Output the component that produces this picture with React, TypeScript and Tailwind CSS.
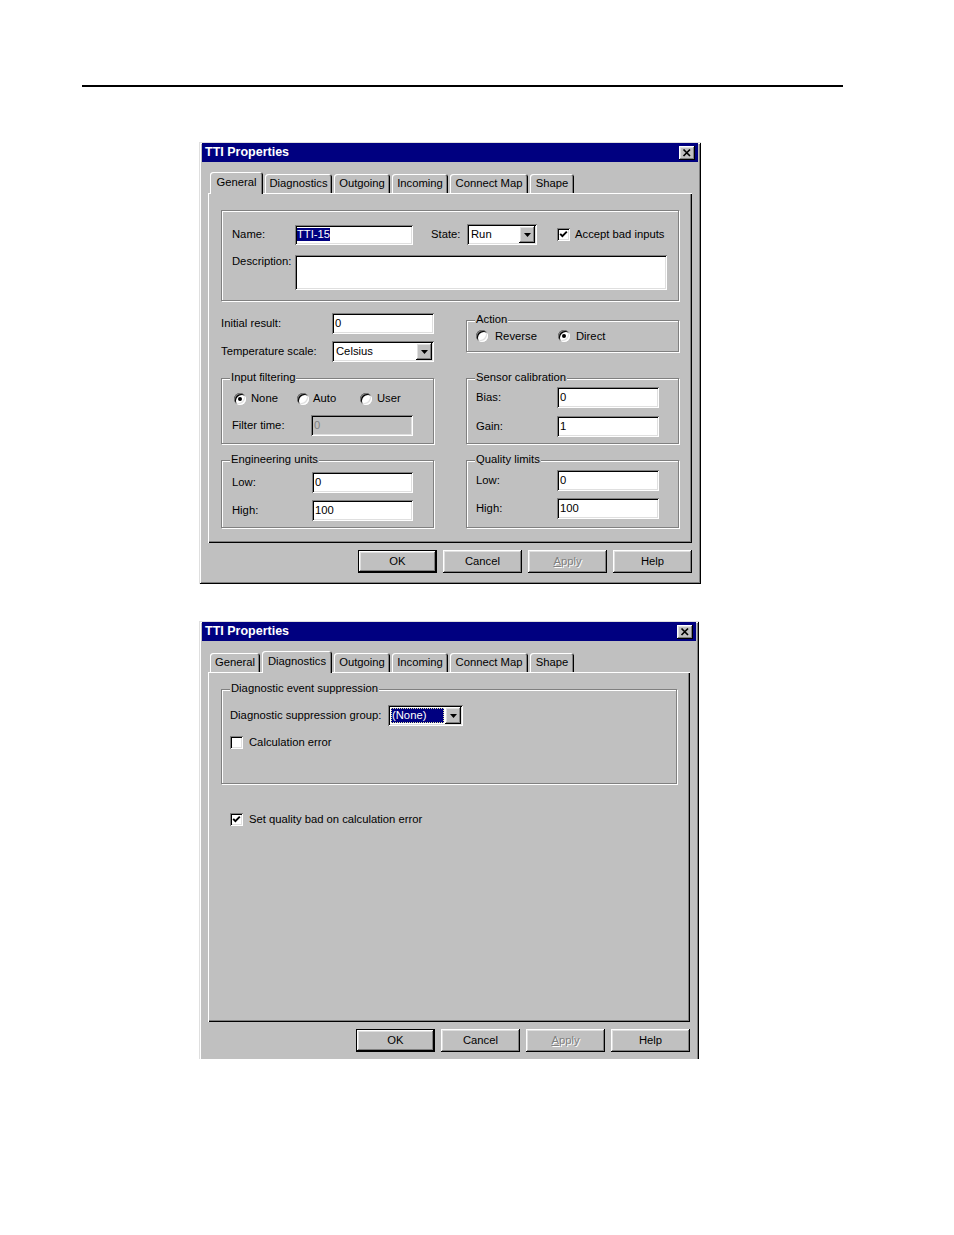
import React from "react";

const RAISED =
  "shadow-[inset_-1px_-1px_0_#000,inset_1px_1px_0_#fff,inset_-2px_-2px_0_#808080,inset_2px_2px_0_#dfdfdf]";
const SUNKEN =
  "shadow-[inset_1px_1px_0_#808080,inset_-1px_-1px_0_#fff,inset_2px_2px_0_#000,inset_-2px_-2px_0_#dfdfdf]";

function Sunken({
  className = "",
  disabled = false,
  children,
}: {
  className?: string;
  disabled?: boolean;
  children?: React.ReactNode;
}) {
  return (
    <div
      className={`${disabled ? "bg-[#c0c0c0] text-[#808080]" : "bg-white"} ${SUNKEN} flex items-center shrink-0 ${className}`}
    >
      {children}
    </div>
  );
}

function Combo({
  className = "",
  highlighted = false,
  children,
}: {
  className?: string;
  highlighted?: boolean;
  children?: React.ReactNode;
}) {
  return (
    <div className={`bg-white ${SUNKEN} flex items-stretch p-[2px] shrink-0 ${className}`}>
      {highlighted ? (
        <div className="flex-1 flex items-center m-[1px] pl-[1px] bg-[#000080] text-white outline-1 outline-dotted outline-[#e0e0a0] -outline-offset-1 min-w-0">
          {children}
        </div>
      ) : (
        <div className="flex-1 flex items-center pl-[2px] min-w-0">{children}</div>
      )}
      <div className={`w-[16px] bg-[#c0c0c0] ${RAISED} flex items-center justify-center`}>
        <svg width="7" height="4" viewBox="0 0 7 4">
          <polygon points="0,0 7,0 3.5,4" fill="#000" />
        </svg>
      </div>
    </div>
  );
}

function Check({ checked = false, className = "" }: { checked?: boolean; className?: string }) {
  return (
    <span
      className={`w-[13px] h-[13px] bg-white ${SUNKEN} flex items-center justify-center shrink-0 ${className}`}
    >
      {checked && (
        <svg width="13" height="13" viewBox="0 0 13 13">
          <polyline points="3.2,5.8 5.4,8.2 9.8,3.6" fill="none" stroke="#000" strokeWidth="1.9" />
        </svg>
      )}
    </span>
  );
}

function Radio({ checked = false }: { checked?: boolean }) {
  return (
    <span
      className={`w-[12px] h-[12px] rounded-full bg-white ${SUNKEN} flex items-center justify-center shrink-0`}
    >
      {checked && <span className="w-[4px] h-[4px] rounded-full bg-black" />}
    </span>
  );
}

function RadioItem({
  label,
  checked = false,
  className = "",
  gapClass = "ml-[5px]",
}: {
  label: string;
  checked?: boolean;
  className?: string;
  gapClass?: string;
}) {
  return (
    <div className={`flex items-center ${className}`}>
      <Radio checked={checked} />
      <span className={gapClass}>{label}</span>
    </div>
  );
}

function Group({
  label,
  className = "",
  children,
}: {
  label?: string;
  className?: string;
  children?: React.ReactNode;
}) {
  return (
    <div
      className={`relative border border-[#808080] shadow-[inset_1px_1px_0_#fff,1px_1px_0_#fff] ${className}`}
    >
      {label && (
        <span className="absolute left-[8px] -top-[8px] px-[1px] bg-[#c0c0c0] leading-[13px] whitespace-nowrap">
          {label}
        </span>
      )}
      {children}
    </div>
  );
}

function Btn({ children, def = false }: { children: React.ReactNode; def?: boolean }) {
  return (
    <div
      className={`w-[79px] h-[23px] bg-[#c0c0c0] flex items-center justify-center ${def ? "border border-black" : ""}`}
    >
      <div className={`w-full h-full flex items-center justify-center ${RAISED}`}>{children}</div>
    </div>
  );
}

const TAB_NAMES = ["General", "Diagnostics", "Outgoing", "Incoming", "Connect Map", "Shape"];

function Tabs({ active, widths }: { active: number; widths: string[] }) {
  return (
    <div className="flex items-end h-[21px] pl-[2px] gap-[2px]">
      {TAB_NAMES.map((t, i) =>
        i === active ? (
          <div
            key={t}
            className={`${widths[i]} h-[22px] -mb-[1px] pb-[2px] relative z-10 bg-[#c0c0c0] rounded-t-[3px] shadow-[inset_1px_1px_0_#fff,inset_-1px_0_0_#000,inset_-2px_0_0_#808080] flex items-center justify-center`}
          >
            {t}
          </div>
        ) : (
          <div
            key={t}
            className={`${widths[i]} h-[19px] rounded-t-[3px] shadow-[inset_1px_1px_0_#fff,inset_-1px_0_0_#000,inset_-2px_0_0_#808080] flex items-center justify-center`}
          >
            {t}
          </div>
        )
      )}
    </div>
  );
}

function TitleBar() {
  return (
    <div className="h-[19px] bg-[#000080] flex items-center justify-between pl-[3px] pr-[3px]">
      <span className="text-white font-bold text-[12.5px] leading-none">TTI Properties</span>
      <div className={`w-[16px] h-[14px] bg-[#c0c0c0] ${RAISED} flex items-center justify-center`}>
        <svg width="16" height="14" viewBox="0 0 16 14">
          <path d="M4.5 3.5 L11 10 M11 3.5 L4.5 10" stroke="#000" strokeWidth="1.7" fill="none" />
        </svg>
      </div>
    </div>
  );
}

function Buttons() {
  return (
    <div className="flex justify-end gap-[6px] mt-[7px] mr-[6px]">
      <Btn def>OK</Btn>
      <Btn>Cancel</Btn>
      <Btn>
        <span className="text-[#808080] [text-shadow:1px_1px_0_#fff]">
          <span className="underline">A</span>pply
        </span>
      </Btn>
      <Btn>Help</Btn>
    </div>
  );
}

const PANEL =
  "h-[350px] mx-[6px] bg-[#c0c0c0] relative shadow-[inset_1px_1px_0_#fff,inset_-1px_-1px_0_#000,inset_-2px_-2px_0_#808080] pt-[17px] px-[13px]";

function Dialog1() {
  return (
    <div className="ml-[199px] mt-[55px] w-[502px] bg-[#c0c0c0] px-[3px] pt-[1px] pb-[11px] shadow-[inset_1px_1px_0_#dfdfdf,inset_-1px_-1px_0_#000,inset_2px_2px_0_#fff,inset_-2px_-2px_0_#808080]">
      <TitleBar />
      <div className="mx-[6px] mt-[10px]">
        <Tabs active={0} widths={["w-[53px]", "w-[67px]", "w-[56px]", "w-[56px]", "w-[78px]", "w-[44px]"]} />
      </div>
      <div className={PANEL}>
        <Group className="h-[91px] pt-[13px] pl-[10px]">
          <div className="flex items-center h-[21px]">
            <span className="w-[63px]">Name:</span>
            <Sunken className="w-[118px] h-[20px] pl-[2px]">
              <span className="bg-[#000080] text-white">TTI-15</span>
            </Sunken>
            <span className="ml-[18px] w-[36px]">State:</span>
            <Combo className="w-[70px] h-[21px]">Run</Combo>
            <Check checked className="ml-[20px]" />
            <span className="ml-[5px]">Accept bad inputs</span>
          </div>
          <div className="flex mt-[10px]">
            <span className="w-[63px]">Description:</span>
            <Sunken className="w-[372px] h-[35px]" />
          </div>
        </Group>

        <div className="grid grid-cols-[213px_213px] gap-x-[32px] mt-[12px]">
          <div>
            <div className="flex items-center">
              <span className="w-[111px]">Initial result:</span>
              <Sunken className="w-[102px] h-[21px] pl-[3px]">0</Sunken>
            </div>
            <div className="flex items-center mt-[7px]">
              <span className="w-[111px]">Temperature scale:</span>
              <Combo className="w-[102px] h-[21px]">Celsius</Combo>
            </div>
          </div>
          <Group label="Action" className="mt-[7px] h-[32px] flex items-center pl-[9px]">
            <RadioItem label="Reverse" className="w-[82px]" gapClass="ml-[7px]" />
            <RadioItem label="Direct" checked gapClass="ml-[6px]" />
          </Group>
        </div>

        <div className="grid grid-cols-[213px_213px] gap-x-[32px] mt-[16px]">
          <Group label="Input filtering" className="h-[66px]">
            <div className="flex items-center h-[13px] mt-[13px] pl-[12px]">
              <RadioItem label="None" checked className="w-[63px]" />
              <RadioItem label="Auto" className="w-[63px]" gapClass="ml-[4px]" />
              <RadioItem label="User" />
            </div>
            <div className="flex items-center mt-[10px] pl-[10px]">
              <span className="w-[79px]">Filter time:</span>
              <Sunken disabled className="w-[102px] h-[21px] pl-[3px]">
                0
              </Sunken>
            </div>
          </Group>
          <Group label="Sensor calibration" className="h-[66px] pt-[8px] pl-[9px]">
            <div className="flex items-center">
              <span className="w-[81px]">Bias:</span>
              <Sunken className="w-[102px] h-[21px] pl-[3px]">0</Sunken>
            </div>
            <div className="flex items-center mt-[8px]">
              <span className="w-[81px]">Gain:</span>
              <Sunken className="w-[102px] h-[21px] pl-[3px]">1</Sunken>
            </div>
          </Group>
        </div>

        <div className="grid grid-cols-[213px_213px] gap-x-[32px] mt-[16px]">
          <Group label="Engineering units" className="h-[68px] pt-[11px] pl-[10px]">
            <div className="flex items-center">
              <span className="w-[80px]">Low:</span>
              <Sunken className="w-[101px] h-[21px] pl-[3px]">0</Sunken>
            </div>
            <div className="flex items-center mt-[7px]">
              <span className="w-[80px]">High:</span>
              <Sunken className="w-[101px] h-[21px] pl-[3px]">100</Sunken>
            </div>
          </Group>
          <Group label="Quality limits" className="h-[68px] pt-[9px] pl-[9px]">
            <div className="flex items-center">
              <span className="w-[81px]">Low:</span>
              <Sunken className="w-[102px] h-[21px] pl-[3px]">0</Sunken>
            </div>
            <div className="flex items-center mt-[7px]">
              <span className="w-[81px]">High:</span>
              <Sunken className="w-[102px] h-[21px] pl-[3px]">100</Sunken>
            </div>
          </Group>
        </div>
      </div>
      <Buttons />
    </div>
  );
}

function Dialog2() {
  return (
    <div className="ml-[199px] mt-[37px] w-[500px] bg-[#c0c0c0] px-[3px] pt-[1px] pb-[7px] shadow-[inset_1px_1px_0_#dfdfdf,inset_-1px_0_0_#000,inset_2px_2px_0_#fff,inset_-2px_0_0_#808080]">
      <TitleBar />
      <div className="mx-[6px] mt-[10px]">
        <Tabs active={1} widths={["w-[50px]", "w-[70px]", "w-[56px]", "w-[56px]", "w-[78px]", "w-[44px]"]} />
      </div>
      <div className={PANEL}>
        <Group label="Diagnostic event suppression" className="h-[95px] pt-[15px] pl-[8px]">
          <div className="flex items-center">
            <span className="w-[158px]">Diagnostic suppression group:</span>
            <Combo className="w-[75px] h-[21px]" highlighted>
              (None)
            </Combo>
          </div>
          <div className="flex items-center mt-[10px]">
            <Check />
            <span className="ml-[6px]">Calculation error</span>
          </div>
        </Group>
        <div className="flex items-center mt-[29px] pl-[9px]">
          <Check checked />
          <span className="ml-[6px]">Set quality bad on calculation error</span>
        </div>
      </div>
      <Buttons />
    </div>
  );
}

export default function App() {
  return (
    <div className="w-[954px] h-[1235px] bg-white pt-[85px] overflow-hidden text-black text-[11.25px] leading-[13px] font-['Liberation_Sans',Arial,sans-serif]">
      <div className="ml-[82px] w-[761px] h-[2px] bg-black" />
      <Dialog1 />
      <Dialog2 />
    </div>
  );
}
